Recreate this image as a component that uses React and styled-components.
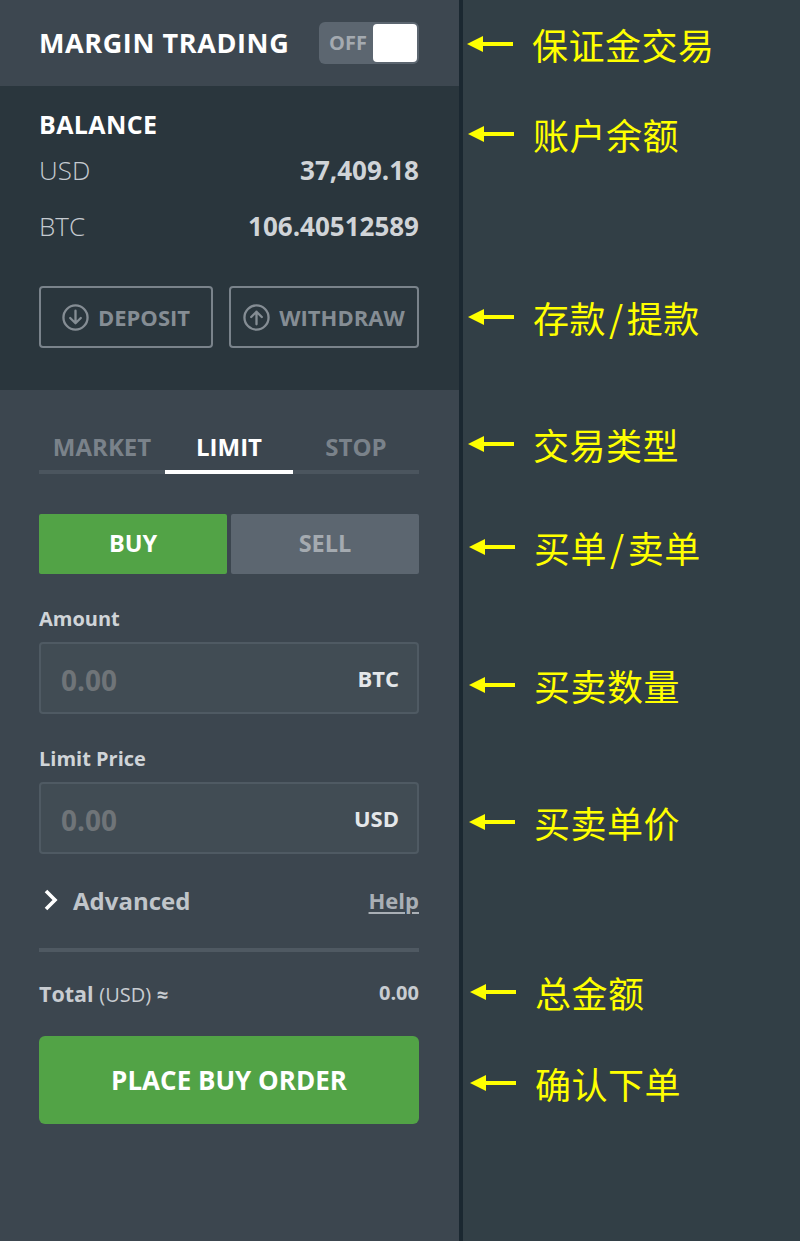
import React from 'react';
import styled, { createGlobalStyle } from 'styled-components';

const Global = createGlobalStyle`
  * { box-sizing: border-box; }
  html, body { margin: 0; padding: 0; background: #323f46; }
  body { font-family: "Open Sans", "Liberation Sans", sans-serif; }
`;
const Page = styled.div`
  width: 800px; height: 1241px; display: flex; overflow: hidden; background: #323f46;
`;
const Sidebar = styled.div`
  width: 463px; height: 100%; flex: none; background: #3c464f; border-right: 4px solid #1b2831;
  display: flex; flex-direction: column;
`;
const Header = styled.div`
  height: 86px; flex: none; padding: 0 40px 0 39px; display: flex; align-items: center; justify-content: space-between;
  background: #3d4750;
`;
const Title = styled.div`
  font-size: 27px; font-weight: 700; color: #fff; line-height: 36px; letter-spacing: 0.6px;
`;
const Toggle = styled.div`
  width: 100px; height: 42px; border-radius: 6px; background: #5c6670; padding: 2px; display: flex; align-items: center; justify-content: space-between;
`;
const ToggleLabel = styled.span`
  font-size: 20px; font-weight: 700; color: #a4aab0; padding-left: 8px; padding-bottom: 2px;
`;
const Knob = styled.span`
  width: 44px; height: 38px; border-radius: 4px; background: #fff;
`;
const Balance = styled.div`
  height: 304px; flex: none; background: #2a363d; padding: 20px 40px 0 39px;
`;
const BalanceTitle = styled.div`
  font-size: 25px; font-weight: 700; color: #fff; line-height: 36px; letter-spacing: 0.4px;
`;
const BalanceRow = styled.div`
  display: flex; justify-content: space-between; align-items: center; height: 36px; margin-bottom: 20px; margin-top: ${p => p.$top || 0}px;
`;
const Currency = styled.span`
  font-size: 26px; font-weight: 300; color: #c5cad0;
`;
const Value = styled.span`
  font-size: 26px; font-weight: 700; color: #d0d4d8;
`;
const Actions = styled.div`
  display: flex; gap: 16px; margin: 42px 0 0 0;
`;
const Outline = styled.div`
  height: 62px; width: ${p => p.$w}px; flex: none; border: 2px solid #7a838b; border-radius: 4px;
  display: flex; align-items: center; justify-content: center; gap: 9px;
  font-size: 22px; font-weight: 700; color: #858d94;
`;
const Form = styled.div`
  padding: 0 40px 0 39px; display: flex; flex-direction: column; flex: 1;
`;
const Tabs = styled.div`
  display: flex; margin-top: 38px; height: 46px; border-bottom: 4px solid #4b555e;
`;
const Tab = styled.div`
  flex: ${p => p.$active ? '0 0 128px' : '1'}; text-align: center; font-size: 24px; font-weight: 700; line-height: 38px; height: 46px;
  color: ${p => p.$active ? '#fff' : '#7a828a'};
  border-bottom: 4px solid ${p => p.$active ? '#fff' : 'transparent'};
`;
const Side = styled.div`
  display: flex; gap: 4px; margin-top: 40px;
`;
const SideButton = styled.div`
  flex: 1; height: 60px; border-radius: 2px; display: flex; align-items: center; justify-content: center; padding-bottom: 3px;
  font-size: 23.5px; font-weight: 700;
  background: ${p => p.$active ? '#52a346' : '#5c6670'};
  color: ${p => p.$active ? '#fff' : '#a4aab0'};
`;
const FieldLabel = styled.div`
  font-size: 20px; font-weight: 700; color: #d0d4d8; line-height: 28px; margin-top: ${p => p.$top}px;
`;
const Field = styled.div`
  height: 72px; margin-top: 9px; border: 2px solid #4f5a63; border-radius: 4px; background: #414c54;
  display: flex; align-items: center; justify-content: space-between; padding: 0 18px 0 20px;
`;
const Placeholder = styled.span`
  font-size: 28px; font-weight: 700; color: #6f7478; padding-top: 3px;
`;
const Unit = styled.span`
  font-size: 22px; font-weight: 700; color: #e4e7ea;
`;
const AdvancedRow = styled.div`
  display: flex; align-items: center; justify-content: space-between; margin-top: 30px; height: 32px;
`;
const Advanced = styled.div`
  display: flex; align-items: center; gap: 15px; padding-left: 5px; font-size: 24px; font-weight: 700; color: #c0c5ca;
`;
const Help = styled.a`
  font-size: 22px; font-weight: 700; color: #a9afb5; text-decoration: underline; text-underline-offset: 3px;
`;
const Divider = styled.div`
  height: 4px; background: #4f5962; margin-top: 32px;
`;
const TotalRow = styled.div`
  display: flex; justify-content: space-between; align-items: center; margin-top: 25px; height: 32px;
`;
const TotalLabel = styled.div`
  font-size: 21.5px; font-weight: 700; color: #c8ccd1;
`;
const TotalUnit = styled.span`
  font-size: 20px; font-weight: 400; color: #c8ccd1;
`;
const Approx = styled.span`
  font-size: 20px; font-weight: 700; color: #c8ccd1;
`;
const TotalValue = styled.div`
  font-size: 20px; font-weight: 700; color: #c8ccd1; margin-top: -2px;
`;
const Place = styled.div`
  height: 88px; margin-top: 27px; border-radius: 6px; background: #52a346; color: #fff;
  display: flex; align-items: center; justify-content: center; font-size: 26px; font-weight: 700;
`;
const Notes = styled.div`
  flex: 1; display: flex; flex-direction: column;
`;
const Note = styled.div`
  height: 50px; display: flex; align-items: center; margin-top: ${p => p.$top}px; padding-left: ${p => p.$left}px;
  color: #ffff00; font-size: 36px; font-family: "Noto Sans CJK SC", "Noto Sans", sans-serif; line-height: 50px;
`;
const NoteText = styled.span`
  margin-left: 19px; letter-spacing: 0.5px;
`;
const Slash = styled.span`
  margin: 0 3px;
`;

const Arrow = () => (
  <svg width="46" height="16" viewBox="0 0 46 16" style={{ flex: 'none' }}>
    <path d="M0 8 L16 0 V6 H46 V10 H16 V16 Z" fill="#ffff00" />
  </svg>
);
const CircleArrow = ({ up }) => (
  <svg width="27" height="27" viewBox="0 0 28 28" fill="none" stroke="#858d94" strokeWidth="2.4" strokeLinecap="round" strokeLinejoin="round" style={{ flex: 'none' }}>
    <circle cx="14" cy="14" r="12.5" />
    {up
      ? <path d="M14 21 V8 M8.5 13.5 L14 8 L19.5 13.5" />
      : <path d="M14 7 V20 M8.5 14.5 L14 20 L19.5 14.5" />}
  </svg>
);
const Chevron = () => (
  <svg width="14" height="22" viewBox="0 0 14 22" fill="none" stroke="#fff" strokeWidth="3.6">
    <path d="M2 2 L11 11 L2 20" />
  </svg>
);

const notes = [
  [19, 4, '保证金交易'],
  [40, 5, '账户余额'],
  [133, 5, ['存款', '提款']],
  [77, 5, '交易类型'],
  [53, 6, ['买单', '卖单']],
  [88, 6, '买卖数量'],
  [87, 6, '买卖单价'],
  [120, 7, '总金额'],
  [41, 7, '确认下单'],
];

export default function App() {
  return (
    <Page>
      <Global />
      <Sidebar>
        <Header>
          <Title>MARGIN TRADING</Title>
          <Toggle>
            <ToggleLabel>OFF</ToggleLabel>
            <Knob />
          </Toggle>
        </Header>
        <Balance>
          <BalanceTitle>BALANCE</BalanceTitle>
          <BalanceRow $top={10}><Currency>USD</Currency><Value>37,409.18</Value></BalanceRow>
          <BalanceRow><Currency>BTC</Currency><Value>106.40512589</Value></BalanceRow>
          <Actions>
            <Outline $w={174}><CircleArrow />DEPOSIT</Outline>
            <Outline $w={190}><CircleArrow up />WITHDRAW</Outline>
          </Actions>
        </Balance>
        <Form>
          <Tabs>
            <Tab>MARKET</Tab>
            <Tab $active>LIMIT</Tab>
            <Tab>STOP</Tab>
          </Tabs>
          <Side>
            <SideButton $active>BUY</SideButton>
            <SideButton>SELL</SideButton>
          </Side>
          <FieldLabel $top={31}>Amount</FieldLabel>
          <Field><Placeholder>0.00</Placeholder><Unit>BTC</Unit></Field>
          <FieldLabel $top={31}>Limit Price</FieldLabel>
          <Field><Placeholder>0.00</Placeholder><Unit>USD</Unit></Field>
          <AdvancedRow>
            <Advanced><Chevron />Advanced</Advanced>
            <Help>Help</Help>
          </AdvancedRow>
          <Divider />
          <TotalRow>
            <TotalLabel>Total <TotalUnit>(USD)</TotalUnit> <Approx>≈</Approx></TotalLabel>
            <TotalValue>0.00</TotalValue>
          </TotalRow>
          <Place>PLACE BUY ORDER</Place>
        </Form>
      </Sidebar>
      <Notes>
        {notes.map(([top, left, text]) => (
          <Note key={String(text)} $top={top} $left={left}>
            <Arrow />
            <NoteText>{Array.isArray(text) ? <>{text[0]}<Slash>/</Slash>{text[1]}</> : text}</NoteText>
          </Note>
        ))}
      </Notes>
    </Page>
  );
}
